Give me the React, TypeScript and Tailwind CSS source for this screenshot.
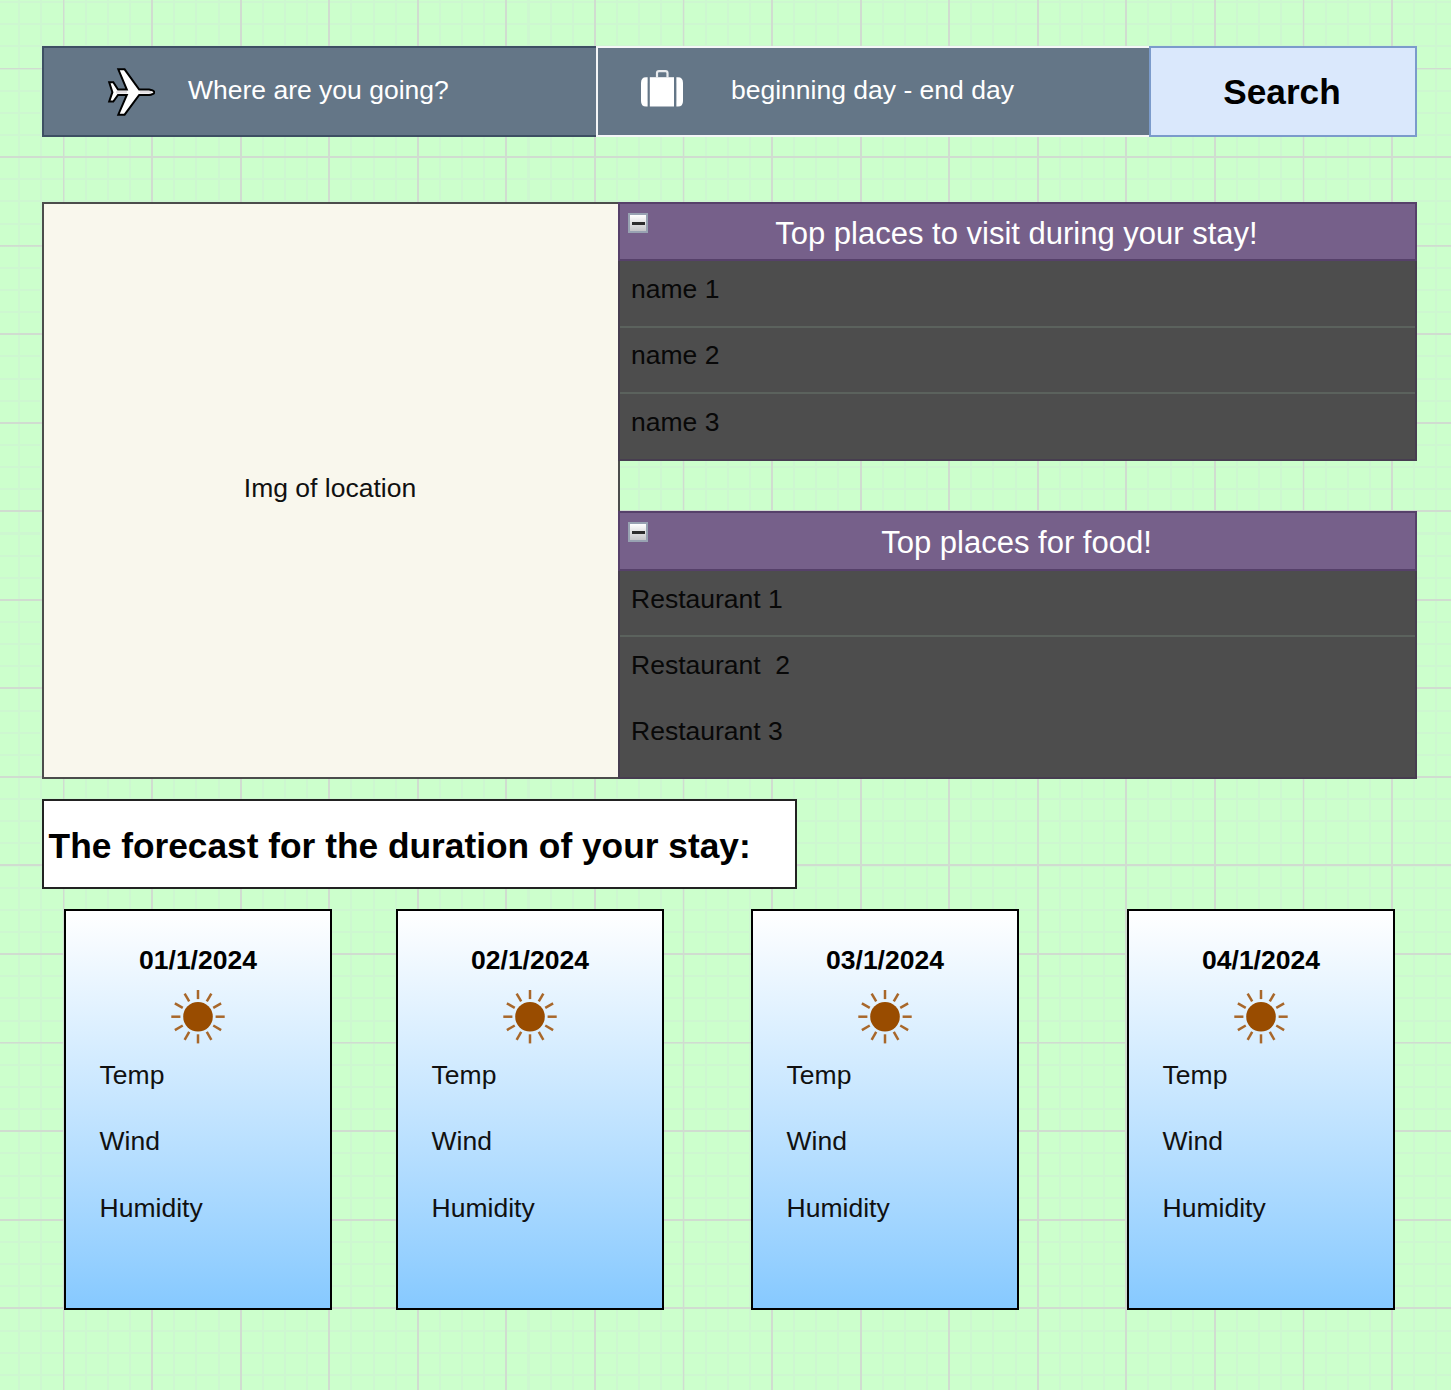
const HEADER = "relative flex h-[60px] items-center justify-center border-2 border-[#56406a] bg-[#76608a] pt-[4px] pr-[2px] text-[31px] leading-[32px] text-white";

function PlaneIcon() {
  return (
    <svg viewBox="0 0 48 48" className="ml-[63px] h-12 w-12 shrink-0" fill="#fff" stroke="#000" strokeWidth="2" strokeLinejoin="miter">
      <path d="M2.2 14.3 H6.3 L11 21.5 H19.8 L11.3 1.3 H17.6 L32.2 21.5 H42 Q47 22.3 47.4 24.3 Q47 26.4 42 27 H32.2 L17.6 46.7 H11.3 L19.8 27 H11 L6.3 33.5 H2.2 L5.4 24.2 Z" />
      <path d="M9 24.3 H20 M33 24.3 H44" stroke="#e4e0e4" strokeWidth="2.6" />
    </svg>
  );
}

function LuggageIcon() {
  return (
    <svg viewBox="0 0 44 38" className="ml-[42px] h-[38px] w-11 shrink-0" fill="#fff">
      <path d="M7.6 7.2V36.5H6Q1 36.5 1 31V13Q1 7.2 6 7.2Z" />
      <path d="M9.8 7.2H34V36.5H9.8Z" />
      <path d="M36.4 7.2H38Q43 7.2 43 13V31Q43 36.5 38 36.5H36.4Z" />
      <path d="M17 8V3Q17 1.2 19 1.2H25.5Q27.5 1.2 27.5 3V8" fill="none" stroke="#e8eaed" strokeWidth="2.2" />
    </svg>
  );
}

function SunIcon() {
  const rays = [0, 30, 60, 90, 120, 150, 180, 210, 240, 270, 300, 330];
  return (
    <svg viewBox="-27 -27 54 54" className="h-[54px] w-[54px]" fill="#994c00">
      <circle cy="-0.3" r="14.8" />
      {rays.map((a) => (
        <path key={a} d="M0 -26.7V-17.6" stroke="#a8672a" strokeWidth="2.5" transform={`translate(0 -0.3) rotate(${a})`} />
      ))}
    </svg>
  );
}

function Collapse() {
  return (
    <span className="absolute top-[9px] left-[8px] flex h-5 w-5 items-center justify-center border-2 border-[#98a2b2] bg-linear-to-b from-white to-[#c4c4c7]">
      <span className="h-[3px] w-[13px] bg-[#2c2c2c]" />
    </span>
  );
}

function Row({ text, divider }: { text: string; divider?: boolean }) {
  return (
    <div className="relative h-[66.2px] pt-[13.7px] pl-[11px] text-[26.5px] leading-[30px] whitespace-pre text-[#080808]">
      {text}
      {divider && <span className="absolute right-0 bottom-[-1.2px] left-0 h-[2px] bg-[#5b625d]" />}
    </div>
  );
}

function PlaceList({ title, items, dividers, className }: { title: string; items: string[]; dividers: number; className: string }) {
  return (
    <section className={className}>
      <h2 className={HEADER}>
        <Collapse />
        {title}
      </h2>
      <div className="-mt-px flex-1 border-x-2 border-b-2 border-[#473d50] bg-[#4d4d4d]">
        {items.map((t, i) => (
          <Row key={t} text={t} divider={i < dividers} />
        ))}
      </div>
    </section>
  );
}

function Day({ date, className }: { date: string; className: string }) {
  return (
    <article className={className}>
      <h3 className="mt-[34px] text-[26.5px] leading-[30px] font-bold">{date}</h3>
      <div className="mt-[15px]">
        <SunIcon />
      </div>
      <div className="mt-[16px] flex w-full flex-col gap-[36.4px] pl-[33.6px] text-[26.5px] leading-[30px] text-[#111]">
        <span>Temp</span>
        <span>Wind</span>
        <span>Humidity</span>
      </div>
    </article>
  );
}

const GRID = [
  "bg-[#ccffcc]",
  "bg-[repeating-linear-gradient(90deg,#d0dcd0_0px,#d0dcd0_1.8px,transparent_2px,transparent_88.57px),repeating-linear-gradient(180deg,#d0dcd0_0px,#d0dcd0_1.8px,transparent_2px,transparent_88.55px),repeating-linear-gradient(90deg,#cdf7d0_0px,#cdf7d0_2px,transparent_2px,transparent_22.14px),repeating-linear-gradient(180deg,#cdf7d0_0px,#cdf7d0_2px,transparent_2px,transparent_22.14px)]",
  "bg-no-repeat bg-[size:1600px_1600px] bg-[position:-26px_-21px]",
].join(" ");

const CARD = "flex h-[401px] w-[268px] shrink-0 flex-col items-center border-2 border-black bg-linear-to-b from-white to-[#86c9ff]";

export default function App() {
  return (
    <main className={`h-[1390px] w-[1451px] overflow-hidden pt-[46px] pl-[42px] font-['Liberation_Sans',Arial,sans-serif] text-black ${GRID}`}>
      <div className="flex h-[91px] w-[1375px] text-[26.5px] text-white">
        <div className="flex w-[554px] items-center border-2 border-r-0 border-[#3d4f63] bg-[#647687]">
          <PlaneIcon />
          <span className="-mt-[2px] ml-[33px]">Where are you going?</span>
        </div>
        <div className="flex w-[553px] items-center border-2 border-r-0 border-[#f4f6f7] bg-[#647687]">
          <div className="-mt-[6px]">
            <LuggageIcon />
          </div>
          <span className="-mt-[2px] ml-[47px]">beginning day - end day</span>
        </div>
        <button className="w-[268px] border-2 border-[#7b9bcb] bg-[#dae8fc] pt-[2px] pr-[2px] text-[35.2px] font-bold text-black">Search</button>
      </div>

      <div className="mt-[65px] flex h-[577px] w-[1375px]">
        <div className="flex w-[578px] shrink-0 items-center justify-center border-2 border-[#4c4c4c] bg-[#f9f7ed] pr-[2px] pb-[3px] text-[26.5px] text-[#111]">
          Img of location
        </div>
        <div className="-ml-[2px] flex w-[799px] shrink-0 flex-col justify-between">
          <PlaceList title="Top places to visit during your stay!" items={["name 1", "name 2", "name 3"]} dividers={2} className="flex h-[259px] flex-col" />
          <PlaceList title="Top places for food!" items={["Restaurant 1", "Restaurant  2", "Restaurant 3"]} dividers={1} className="flex h-[268px] flex-col" />
        </div>
      </div>

      <h1 className="mt-[20px] flex h-[90px] w-[755px] items-center border-2 border-[#222] bg-white pt-[3px] pl-[4.6px] text-[35.3px] leading-[41px] font-bold whitespace-nowrap">
        The forecast for the duration of your stay:
      </h1>

      <div className="mt-[20px] ml-[22px] flex">
        <Day date="01/1/2024" className={CARD} />
        <Day date="02/1/2024" className={`${CARD} ml-[64px]`} />
        <Day date="03/1/2024" className={`${CARD} ml-[87px]`} />
        <Day date="04/1/2024" className={`${CARD} ml-[108px]`} />
      </div>
    </main>
  );
}
